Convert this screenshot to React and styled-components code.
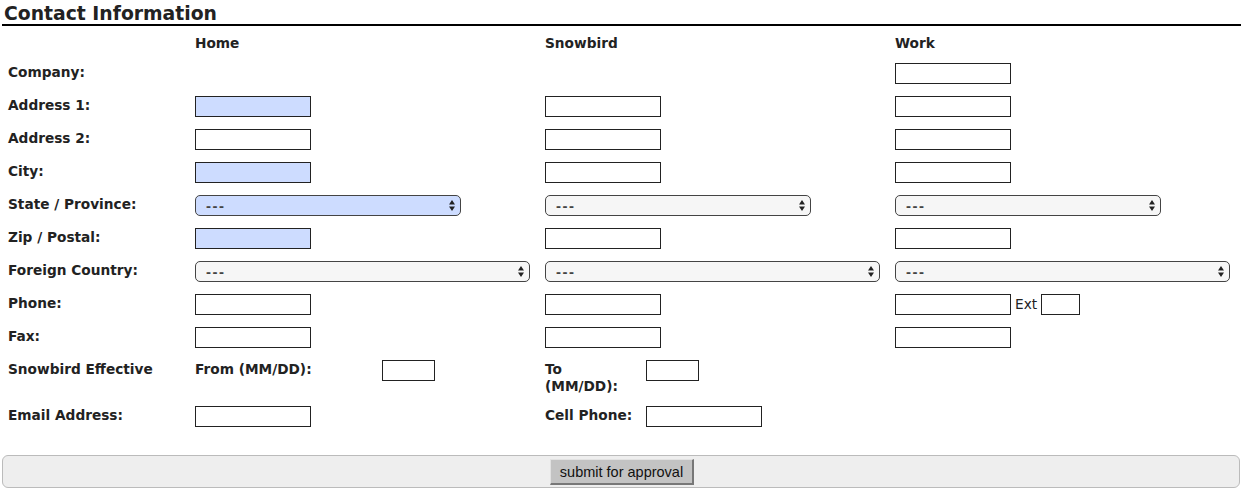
import React from 'react'
import styled, { createGlobalStyle } from 'styled-components'

const GlobalStyle = createGlobalStyle`
body {
  margin: 0;
  background: #fff;
  font-family: "DejaVu Sans", Verdana, sans-serif;
  color: #222;
}
`

const Page = styled.div`
width: 1239px;
padding: 0 0 0 2px;
box-sizing: content-box;
`

const Heading = styled.h2`
margin: 0;
padding: 0 0 0 2px;
height: 24px;
line-height: 27px;
font-size: 18.8px;
font-weight: bold;
color: #222;
border-bottom: 2px solid #000;
overflow: hidden;
`

const Table = styled.div`
margin-left: 6px;
display: flex;
flex-direction: column;
`

const Row = styled.div`
display: grid;
grid-template-columns: 187px 350px 350px 1fr;
min-height: ${(p) => (p.$head ? 34 : 33)}px;
`

const Label = styled.div`
font-size: 13.7px;
font-weight: bold;
line-height: 17px;
padding: ${(p) => (p.$head ? '9px 0 0' : '4px 0 8px')};
`

const Cell = styled.div`
display: flex;
align-items: flex-start;
padding-top: 3px;
`

const SubCell = styled.div`
display: flex;
align-items: flex-start;
`

const TextBox = styled.input`
width: ${(p) => p.$w || 116}px;
height: 21px;
box-sizing: border-box;
margin: 0;
border: 1px solid #222;
border-radius: 0;
background: ${(p) => (p.$req ? '#cddcff' : '#fff')};
padding: 0 3px;
font-size: 13px;
`

const SubLabel = styled.div`
font-size: 13.7px;
font-weight: bold;
line-height: 17px;
width: ${(p) => p.$w}px;
flex: none;
padding: 1px 12px 8px 0;
box-sizing: border-box;
`

const Ext = styled.span`
font-size: 13.7px;
line-height: 21px;
margin: 0 4px;
color: #222;
`

const SelectWrap = styled.span`
position: relative;
display: inline-block;
width: ${(p) => p.$w}px;
height: 21px;
`

const Select = styled.select`
appearance: none;
-webkit-appearance: none;
width: 100%;
height: 21px;
margin: 0;
box-sizing: border-box;
border: 1px solid #444;
border-radius: 5px;
background: ${(p) => (p.$req ? '#cddcff' : '#f6f6f6')};
padding: 0 0 0 10px;
font-family: "Liberation Sans", Arial, sans-serif;
font-size: 15px;
font-weight: bold;
letter-spacing: 1.5px;
color: #444;
outline: none;
`

const Arrows = styled.svg`
position: absolute;
right: 6px;
top: 5px;
pointer-events: none;
`

const Bar = styled.div`
margin: 19px 1px 0 0;
height: 33px;
box-sizing: border-box;
border: 1px solid #bbb;
border-radius: 6px;
background: #eee;
display: flex;
justify-content: center;
padding-top: 3px;
`

const Button = styled.button`
width: 144px;
height: 26px;
margin: 0 0 0 2px;
box-sizing: border-box;
background: #c3c3c3;
border-style: solid;
border-width: 1px 2px 2px 1px;
border-color: #e2e2e2 #777 #777 #e2e2e2;
font-family: "Liberation Sans", Arial, sans-serif;
font-size: 14.5px;
color: #111;
padding: 0;
`

const Dropdown = ({ w, req }) => (
  <SelectWrap $w={w}>
    <Select $req={req} defaultValue="">
      <option value="">---</option>
    </Select>
    <Arrows width="6" height="11" viewBox="0 0 6 11">
      <path d="M3 0 L6 4.5 L0 4.5 Z M3 11 L6 6.5 L0 6.5 Z" fill="#222" />
    </Arrows>
  </SelectWrap>
)

const rows = [
  { label: 'Company:', cols: [null, null, 'text'] },
  { label: 'Address 1:', cols: ['req', 'text', 'text'] },
  { label: 'Address 2:', cols: ['text', 'text', 'text'] },
  { label: 'City:', cols: ['req', 'text', 'text'] },
  { label: 'State / Province:', cols: ['reqstate', 'state', 'state'] },
  { label: 'Zip / Postal:', cols: ['req', 'text', 'text'] },
  { label: 'Foreign Country:', cols: ['country', 'country', 'country'] },
  { label: 'Phone:', cols: ['text', 'text', 'phone'] },
  { label: 'Fax:', cols: ['text', 'text', 'text'] },
]

const Field = ({ kind }) => {
  if (!kind) return null
  if (kind === 'req') return <TextBox $req />
  if (kind === 'text') return <TextBox />
  if (kind === 'reqstate') return <Dropdown w={266} req />
  if (kind === 'state') return <Dropdown w={266} />
  if (kind === 'country') return <Dropdown w={335} />
  if (kind === 'phone')
    return (
      <>
        <TextBox />
        <Ext>Ext</Ext>
        <TextBox $w={39} />
      </>
    )
  return null
}

const App = () => {
  return (
    <>
      <GlobalStyle />
      <Page>
        <Heading>Contact Information</Heading>
        <Table>
          <Row $head>
            <div />
            <Label $head>Home</Label>
            <Label $head>Snowbird</Label>
            <Label $head>Work</Label>
          </Row>
          {rows.map((r) => (
            <Row key={r.label}>
              <Label>{r.label}</Label>
              {r.cols.map((c, i) => (
                <Cell key={i}>
                  <Field kind={c} />
                </Cell>
              ))}
            </Row>
          ))}
          <Row>
            <Label>Snowbird Effective</Label>
            <Cell>
              <SubCell>
                <SubLabel $w={187}>From (MM/DD):</SubLabel>
                <TextBox $w={53} />
              </SubCell>
            </Cell>
            <Cell>
              <SubCell>
                <SubLabel $w={101}>To (MM/DD):</SubLabel>
                <TextBox $w={53} />
              </SubCell>
            </Cell>
            <Cell />
          </Row>
          <Row>
            <Label>Email Address:</Label>
            <Cell>
              <TextBox />
            </Cell>
            <Cell>
              <SubCell>
                <SubLabel $w={101}>Cell Phone:</SubLabel>
                <TextBox />
              </SubCell>
            </Cell>
            <Cell />
          </Row>
        </Table>
        <Bar>
          <Button type="button">submit for approval</Button>
        </Bar>
      </Page>
    </>
  )
}

export default App
